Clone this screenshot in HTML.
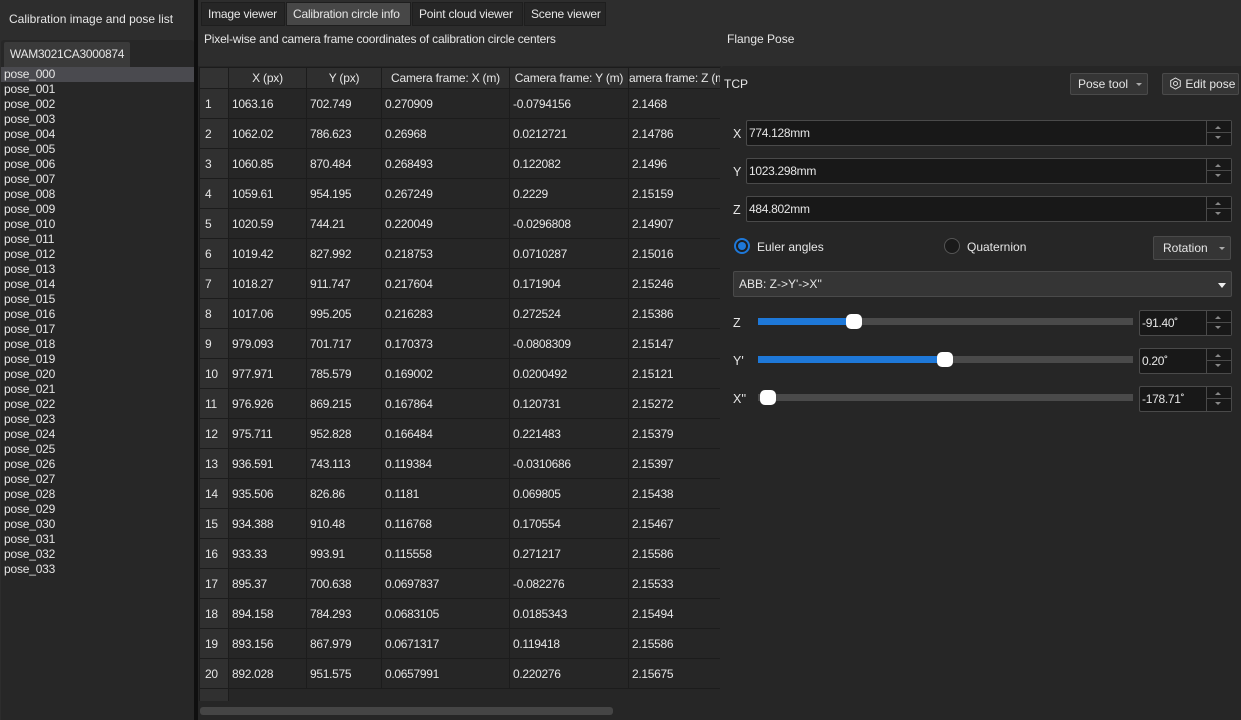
<!DOCTYPE html>
<html><head><meta charset="utf-8"><style>
*{box-sizing:border-box;margin:0;padding:0}
body{width:1241px;height:720px;background:#2d2d2d;font-family:"Liberation Sans",sans-serif;font-size:12px;color:#e6e6e6;position:relative;overflow:hidden;white-space:nowrap}
.a{position:absolute}
.list div{height:15px;line-height:15px;padding-left:4px;font-size:12px;letter-spacing:-0.2px}
table{border-collapse:collapse;table-layout:fixed}
td,th{height:30px;border:1px solid #1c1c1c;font-weight:normal;font-size:12px;white-space:nowrap;overflow:hidden;text-align:left;padding-left:3px;background:#262626;letter-spacing:-0.3px}
th{height:21px;background:#2f2f2f;text-align:center;padding:0;letter-spacing:-0.2px}
td.n{background:#303030;padding-left:5px}
.tab{position:absolute;top:2px;height:24px;line-height:23px;background:#262626;border:1px solid #1e1e1e;padding:0 6px;font-size:12px;letter-spacing:-0.2px;overflow:hidden}
.spin{position:absolute;background:#181818;border:1px solid #4a4a4a;border-radius:2px;height:26px;line-height:24px;padding-left:2px;font-size:12px;letter-spacing:-0.3px}
.spin:after{content:"";position:absolute;right:0;top:0;width:24px;height:24px;border-left:1px solid #4a4a4a;background:linear-gradient(#181818 11px,#4a4a4a 11px,#4a4a4a 12px,#181818 12px)}
.ar{position:absolute;width:0;height:0;border-left:3px solid transparent;border-right:3px solid transparent;z-index:2}
.up{border-bottom:3px solid #888}.dn{border-top:3px solid #888}
.lbl{position:absolute;font-size:12.5px}
.btn{position:absolute;background:#353535;border:1px solid #4a4a4a;border-radius:2px;height:22px;line-height:20px;font-size:12.5px;padding-left:7px}
.track{position:absolute;height:7px;background:#4a4a4a}
.fill{position:absolute;left:0;top:0;height:7px;background:#1e78d8}
.knob{position:absolute;top:-4px;width:16px;height:15px;background:#fff;border-radius:5px}
</style></head><body>
<div class="a" style="left:9px;top:12px;font-size:12px">Calibration image and pose list</div>
<div class="a" style="left:1px;top:40px;width:193px;height:680px;background:#272727;border-radius:3px 3px 0 0"></div>
<div class="a" style="left:4px;top:42px;width:126px;height:25px;background:#3a3a3a;border-radius:2px 2px 0 0;line-height:24px;text-align:center;font-size:12px;letter-spacing:-0.3px">WAM3021CA3000874</div>
<div class="a" style="left:1px;top:67px;width:193px;height:15px;background:#4a4a4f"></div>
<div class="a list" style="left:0;top:67px;width:193px">
<div>pose_000</div><div>pose_001</div><div>pose_002</div><div>pose_003</div><div>pose_004</div><div>pose_005</div><div>pose_006</div><div>pose_007</div><div>pose_008</div><div>pose_009</div><div>pose_010</div><div>pose_011</div><div>pose_012</div><div>pose_013</div><div>pose_014</div><div>pose_015</div><div>pose_016</div><div>pose_017</div><div>pose_018</div><div>pose_019</div><div>pose_020</div><div>pose_021</div><div>pose_022</div><div>pose_023</div><div>pose_024</div><div>pose_025</div><div>pose_026</div><div>pose_027</div><div>pose_028</div><div>pose_029</div><div>pose_030</div><div>pose_031</div><div>pose_032</div><div>pose_033</div>
</div>
<div class="a" style="left:194px;top:0;width:4px;height:720px;background:#0f0f0f"></div>
<div class="tab" style="left:201px;width:84px">Image viewer</div>
<div class="tab" style="left:286px;width:125px;background:#474747">Calibration circle info</div>
<div class="tab" style="left:412px;width:111px">Point cloud viewer</div>
<div class="tab" style="left:524px;width:82px">Scene viewer</div>
<div class="a" style="left:204px;top:32px;font-size:12px;letter-spacing:-0.2px">Pixel-wise and camera frame coordinates of calibration circle centers</div>
<div class="a" style="left:727px;top:32px;font-size:12px">Flange Pose</div>
<div class="a" style="left:198px;top:66px;width:523px;height:654px;background:#262626"></div>
<div class="a" style="left:199px;top:67px;width:521px;height:634px;overflow:hidden">
<table style="width:545px">
<colgroup><col style="width:29px"><col style="width:78px"><col style="width:75px"><col style="width:128px"><col style="width:119px"><col style="width:116px"></colgroup>
<tr><th style="background:#333"></th><th>X (px)</th><th>Y (px)</th><th>Camera frame: X (m)</th><th>Camera frame: Y (m)</th><th style="text-align:left">amera frame: Z (m)</th></tr>
<tr><td class="n">1</td><td>1063.16</td><td>702.749</td><td>0.270909</td><td>-0.0794156</td><td>2.1468</td></tr>
<tr><td class="n">2</td><td>1062.02</td><td>786.623</td><td>0.26968</td><td>0.0212721</td><td>2.14786</td></tr>
<tr><td class="n">3</td><td>1060.85</td><td>870.484</td><td>0.268493</td><td>0.122082</td><td>2.1496</td></tr>
<tr><td class="n">4</td><td>1059.61</td><td>954.195</td><td>0.267249</td><td>0.2229</td><td>2.15159</td></tr>
<tr><td class="n">5</td><td>1020.59</td><td>744.21</td><td>0.220049</td><td>-0.0296808</td><td>2.14907</td></tr>
<tr><td class="n">6</td><td>1019.42</td><td>827.992</td><td>0.218753</td><td>0.0710287</td><td>2.15016</td></tr>
<tr><td class="n">7</td><td>1018.27</td><td>911.747</td><td>0.217604</td><td>0.171904</td><td>2.15246</td></tr>
<tr><td class="n">8</td><td>1017.06</td><td>995.205</td><td>0.216283</td><td>0.272524</td><td>2.15386</td></tr>
<tr><td class="n">9</td><td>979.093</td><td>701.717</td><td>0.170373</td><td>-0.0808309</td><td>2.15147</td></tr>
<tr><td class="n">10</td><td>977.971</td><td>785.579</td><td>0.169002</td><td>0.0200492</td><td>2.15121</td></tr>
<tr><td class="n">11</td><td>976.926</td><td>869.215</td><td>0.167864</td><td>0.120731</td><td>2.15272</td></tr>
<tr><td class="n">12</td><td>975.711</td><td>952.828</td><td>0.166484</td><td>0.221483</td><td>2.15379</td></tr>
<tr><td class="n">13</td><td>936.591</td><td>743.113</td><td>0.119384</td><td>-0.0310686</td><td>2.15397</td></tr>
<tr><td class="n">14</td><td>935.506</td><td>826.86</td><td>0.1181</td><td>0.069805</td><td>2.15438</td></tr>
<tr><td class="n">15</td><td>934.388</td><td>910.48</td><td>0.116768</td><td>0.170554</td><td>2.15467</td></tr>
<tr><td class="n">16</td><td>933.33</td><td>993.91</td><td>0.115558</td><td>0.271217</td><td>2.15586</td></tr>
<tr><td class="n">17</td><td>895.37</td><td>700.638</td><td>0.0697837</td><td>-0.082276</td><td>2.15533</td></tr>
<tr><td class="n">18</td><td>894.158</td><td>784.293</td><td>0.0683105</td><td>0.0185343</td><td>2.15494</td></tr>
<tr><td class="n">19</td><td>893.156</td><td>867.979</td><td>0.0671317</td><td>0.119418</td><td>2.15586</td></tr>
<tr><td class="n">20</td><td>892.028</td><td>951.575</td><td>0.0657991</td><td>0.220276</td><td>2.15675</td></tr>
<tr><td class="n" style="height:15px"></td><td colspan="5" style="border:none"></td></tr>
</table></div>
<div class="a" style="left:200px;top:707px;width:413px;height:8px;background:#454545;border-radius:3px"></div>
<div class="a" style="left:721px;top:66px;width:520px;height:654px;background:#262626;border-radius:3px 0 0 0"></div>
<div class="lbl" style="left:724px;top:77px;font-size:12px">TCP</div>
<div class="btn" style="left:1070px;top:73px;width:78px;font-size:12px">Pose tool<span style="position:absolute;right:5px;top:9px;border-left:3px solid transparent;border-right:3px solid transparent;border-top:3px solid #aaa"></span></div>
<div class="btn" style="left:1162px;top:73px;width:77px;padding-left:6px;font-size:12px"><svg width="13" height="13" viewBox="0 0 13 13" style="vertical-align:-2px"><path d="M6.5 1 L11.3 3.7 L11.3 9.3 L6.5 12 L1.7 9.3 L1.7 3.7 Z" fill="none" stroke="#ddd" stroke-width="1"/><circle cx="6.5" cy="6.5" r="2" fill="none" stroke="#ddd"/></svg> Edit pose</div>
<div class="lbl" style="left:733px;top:127px">X</div>
<div class="spin" style="left:746px;top:120px;width:486px">774.128mm</div><i class="ar up" style="left:1215px;top:126px"></i><i class="ar dn" style="left:1215px;top:136px"></i>
<div class="lbl" style="left:733px;top:165px">Y</div>
<div class="spin" style="left:746px;top:158px;width:486px">1023.298mm</div><i class="ar up" style="left:1215px;top:164px"></i><i class="ar dn" style="left:1215px;top:174px"></i>
<div class="lbl" style="left:733px;top:203px">Z</div>
<div class="spin" style="left:746px;top:196px;width:486px">484.802mm</div><i class="ar up" style="left:1215px;top:202px"></i><i class="ar dn" style="left:1215px;top:212px"></i>
<div class="a" style="left:734px;top:238px;width:16px;height:16px;border-radius:50%;border:2px solid #1e78d8;background:#1e1e1e"><div style="margin:2px;width:8px;height:8px;border-radius:50%;background:#1e78d8"></div></div>
<div class="lbl" style="left:757px;top:240px;font-size:12px">Euler angles</div>
<div class="a" style="left:944px;top:238px;width:16px;height:16px;border-radius:50%;border:1px solid #555;background:#1a1a1a"></div>
<div class="lbl" style="left:967px;top:240px;font-size:12px">Quaternion</div>
<div class="btn" style="left:1153px;top:236px;width:78px;height:24px;line-height:22px;padding-left:9px;font-size:12px">Rotation<span style="position:absolute;right:5px;top:10px;border-left:3px solid transparent;border-right:3px solid transparent;border-top:3px solid #aaa"></span></div>
<div class="btn" style="left:733px;top:271px;width:499px;height:26px;line-height:24px;padding-left:5px;font-size:12px">ABB: Z-&gt;Y'-&gt;X''<span style="position:absolute;right:5px;top:11px;border-left:4px solid transparent;border-right:4px solid transparent;border-top:5px solid #eee"></span></div>
<div class="lbl" style="left:733px;top:316px">Z</div>
<div class="track" style="left:758px;top:318px;width:375px"><div class="fill" style="width:95px"></div><div class="knob" style="left:88px"></div></div>
<div class="spin" style="left:1139px;top:310px;width:93px">-91.40˚</div><i class="ar up" style="left:1215px;top:316px"></i><i class="ar dn" style="left:1215px;top:326px"></i>
<div class="lbl" style="left:733px;top:354px">Y'</div>
<div class="track" style="left:758px;top:356px;width:375px"><div class="fill" style="width:186px"></div><div class="knob" style="left:179px"></div></div>
<div class="spin" style="left:1139px;top:348px;width:93px">0.20˚</div><i class="ar up" style="left:1215px;top:354px"></i><i class="ar dn" style="left:1215px;top:364px"></i>
<div class="lbl" style="left:733px;top:392px">X''</div>
<div class="track" style="left:758px;top:394px;width:375px"><div class="knob" style="left:2px"></div></div>
<div class="spin" style="left:1139px;top:386px;width:93px">-178.71˚</div><i class="ar up" style="left:1215px;top:392px"></i><i class="ar dn" style="left:1215px;top:402px"></i>
</body></html>
